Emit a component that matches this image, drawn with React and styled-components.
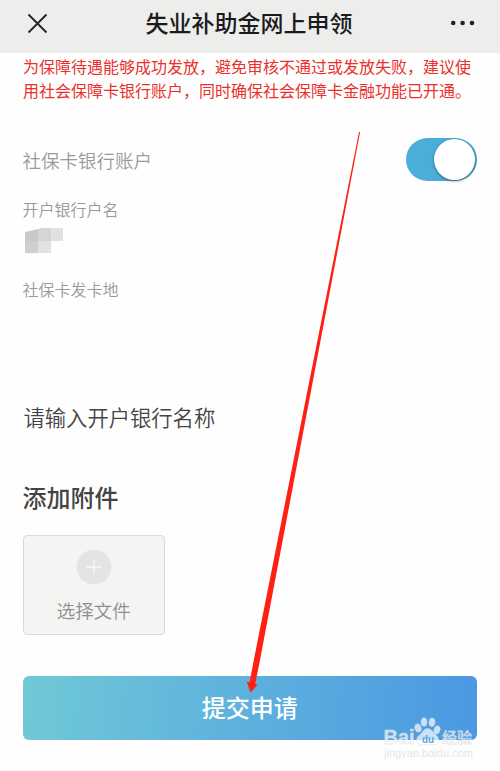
import React, { useState } from 'react';
import styled, { createGlobalStyle } from 'styled-components';

const GlobalStyle = createGlobalStyle`
  * {
    box-sizing: border-box;
  }
  body {
    margin: 0;
    background: #fefefe;
    font-family: "Noto Sans CJK SC", sans-serif;
  }
`;

const Page = styled.div`
  position: relative;
  width: 500px;
  height: 771px;
  overflow: hidden;
`;

const Header = styled.header`
  display: flex;
  align-items: center;
  justify-content: space-between;
  height: 52.5px;
  padding: 0 24px 6px 27px;
  background: #ededec;
`;

const Title = styled.h1`
  margin: 0 0 2px;
  font-size: 23px;
  line-height: 32px;
  font-weight: 500;
  color: #1b1b1b;
`;

const Content = styled.main`
  display: flex;
  flex-direction: column;
  padding: 1.5px 23px 0 22.5px;
`;

const Notice = styled.p`
  margin: 0 -8px 0 0.5px;
  font-size: 16px;
  line-height: 24px;
  color: #ea302c;
`;

const Line = styled.div`
  white-space: nowrap;
`;

const SwitchRow = styled.div`
  display: flex;
  align-items: center;
  justify-content: space-between;
  height: 44px;
  margin-top: 35px;
`;

const Label = styled.div`
  padding-top: ${({ $drop }) => $drop || 0}px;
  font-size: ${({ $size }) => $size || 16}px;
  line-height: 24px;
  font-weight: 350;
  color: #9a9a9a;
`;

const Track = styled.button`
  display: flex;
  justify-content: ${({ $on }) => ($on ? 'flex-end' : 'flex-start')};
  width: 71px;
  height: 43px;
  padding: 1px 2px;
  border: 0;
  border-radius: 22px;
  background: ${({ $on }) => ($on ? '#4badda' : '#dddddd')};
`;

const Knob = styled.span`
  width: 41px;
  height: 41px;
  border-radius: 50%;
  background: #fff;
  box-shadow: 0 1px 3px rgba(0, 0, 0, 0.45);
`;

const Field = styled.div`
  height: ${({ $height }) => $height}px;
  margin-top: ${({ $gap }) => $gap || 0}px;
`;

const Mosaic = styled.svg`
  display: block;
  margin: 7px 0 0 2.5px;
`;

const BankName = styled.div`
  margin-left: 1px;
  font-size: 21.3px;
  line-height: 32px;
  font-weight: 350;
  color: #444;
`;

const SectionTitle = styled.h2`
  margin: 46px 0 0;
  font-size: 24px;
  line-height: 36px;
  font-weight: 500;
  color: #444;
`;

const FilePicker = styled.button`
  display: flex;
  flex-direction: column;
  align-items: center;
  width: 142.4px;
  height: 100px;
  margin-top: 20px;
  padding: 13px 0 0;
  border: 1px solid #dadada;
  border-radius: 4px;
  background: #f4f4f3;
  font-family: inherit;
  font-size: 18.5px;
  line-height: 26px;
  font-weight: 350;
  color: #8f8f8f;
`;

const PlusIcon = styled.svg`
  display: block;
  margin-bottom: 12px;
`;

const Submit = styled.button`
  height: 64px;
  margin-top: 41px;
  padding: 0 0 2px;
  border: 0;
  border-radius: 6px;
  background: linear-gradient(96deg, #70c9d6 0%, #4a98e3 100%);
  font-family: inherit;
  font-size: 24px;
  line-height: 60px;
  font-weight: 500;
  color: #fff;
`;

const Arrow = styled.svg`
  position: absolute;
  left: 0;
  top: 0;
  pointer-events: none;
`;

const Watermark = styled.svg`
  position: absolute;
  left: 376px;
  top: 712px;
  pointer-events: none;
`;

const App = () => {
  const [useCard, setUseCard] = useState(true);
  return (
    <Page>
      <GlobalStyle />
      <Header>
        <svg width="21" height="21" viewBox="0 0 21 21" stroke="#222" strokeWidth="1.8">
          <path d="M1.5 1.5L19.5 19.5M19.5 1.5L1.5 19.5" />
        </svg>
        <Title>失业补助金网上申领</Title>
        <svg width="26" height="6" viewBox="0 0 26 6" fill="#222">
          <circle cx="3.2" cy="3" r="2.3" />
          <circle cx="12.6" cy="3" r="2.3" />
          <circle cx="22" cy="3" r="2.3" />
        </svg>
      </Header>
      <Content>
        <Notice>
          <Line>为保障待遇能够成功发放，避免审核不通过或发放失败，建议使</Line>
          <Line>用社会保障卡银行账户，同时确保社会保障卡金融功能已开通。</Line>
        </Notice>
        <SwitchRow>
          <Label $size={18.5} $drop={2}>社保卡银行账户</Label>
          <Track $on={useCard} onClick={() => setUseCard(!useCard)}>
            <Knob />
          </Track>
        </SwitchRow>
        <Field $gap={16} $height={80}>
          <Label>开户银行户名</Label>
          <Mosaic width="39" height="26" viewBox="0 0 39 26">
            <path d="M0 4L13 1V13H0Z" fill="#c9c9c9" />
            <path d="M13 1L17 0H26V13H13Z" fill="#d5d5d5" />
            <path d="M26 0H38V13H26Z" fill="#e1e1e1" />
            <path d="M0 13H13V25H0Z" fill="#cfcfcf" />
            <path d="M13 13H26V25H13Z" fill="#e2e2e2" />
          </Mosaic>
        </Field>
        <Field $height={124}>
          <Label>社保卡发卡地</Label>
        </Field>
        <BankName>请输入开户银行名称</BankName>
        <SectionTitle>添加附件</SectionTitle>
        <FilePicker>
          <PlusIcon width="36" height="36" viewBox="0 0 36 36">
            <circle cx="18" cy="18" r="17.3" fill="#e4e4e4" />
            <path d="M18 10.5V25.5M10.5 18H25.5" stroke="#f7f7f7" strokeWidth="1.3" />
          </PlusIcon>
          选择文件
        </FilePicker>
        <Submit>提交申请</Submit>
      </Content>
      <Arrow width="500" height="771" viewBox="0 0 500 771">
        <path
          d="M359 132L360.1 132L260 660L255.2 684L257.4 684.8L250.5 692.6L246.6 681.6L249.6 682.4L253.8 660Z"
          fill="#ff2013"
        />
      </Arrow>
      <Watermark width="110" height="52" viewBox="0 0 110 52">
        <g fill="#fff" fillOpacity="0.7" stroke="#d4d8dc" strokeOpacity="0.55" strokeWidth="0.8">
          <text x="7.5" y="32" fontFamily="Liberation Sans, sans-serif" fontWeight="700" fontSize="20" textLength="31" lengthAdjust="spacingAndGlyphs">Bai</text>
          <ellipse cx="42" cy="16" rx="3.1" ry="4.2" transform="rotate(-18 42 16)" />
          <ellipse cx="48" cy="10" rx="3" ry="4.3" />
          <ellipse cx="56" cy="10.3" rx="3" ry="4.3" transform="rotate(8 56 10.3)" />
          <ellipse cx="61" cy="18" rx="3" ry="4.2" transform="rotate(18 61 18)" />
          <path d="M51.5 16.5C47.5 16.5 46.5 21 43.5 23C38.5 27 40.5 33 46 32.8C50 32.5 53 32.5 57 32.8C63 33.2 65.2 27 60 23C57 20.5 55.5 16.5 51.5 16.5Z" />
          <text x="66" y="31" fontFamily="Noto Sans CJK SC, sans-serif" fontWeight="500" fontSize="15" textLength="30" lengthAdjust="spacingAndGlyphs">经验</text>
        </g>
        <text x="46" y="30.5" fill="#62a5dd" fontFamily="Liberation Sans, sans-serif" fontWeight="700" fontSize="10">du</text>
        <text x="8" y="45" fill="#e6e6e6" fontFamily="Liberation Sans, sans-serif" fontSize="10" textLength="89" lengthAdjust="spacingAndGlyphs">jingyan.baidu.com</text>
      </Watermark>
    </Page>
  );
};

export default App;
